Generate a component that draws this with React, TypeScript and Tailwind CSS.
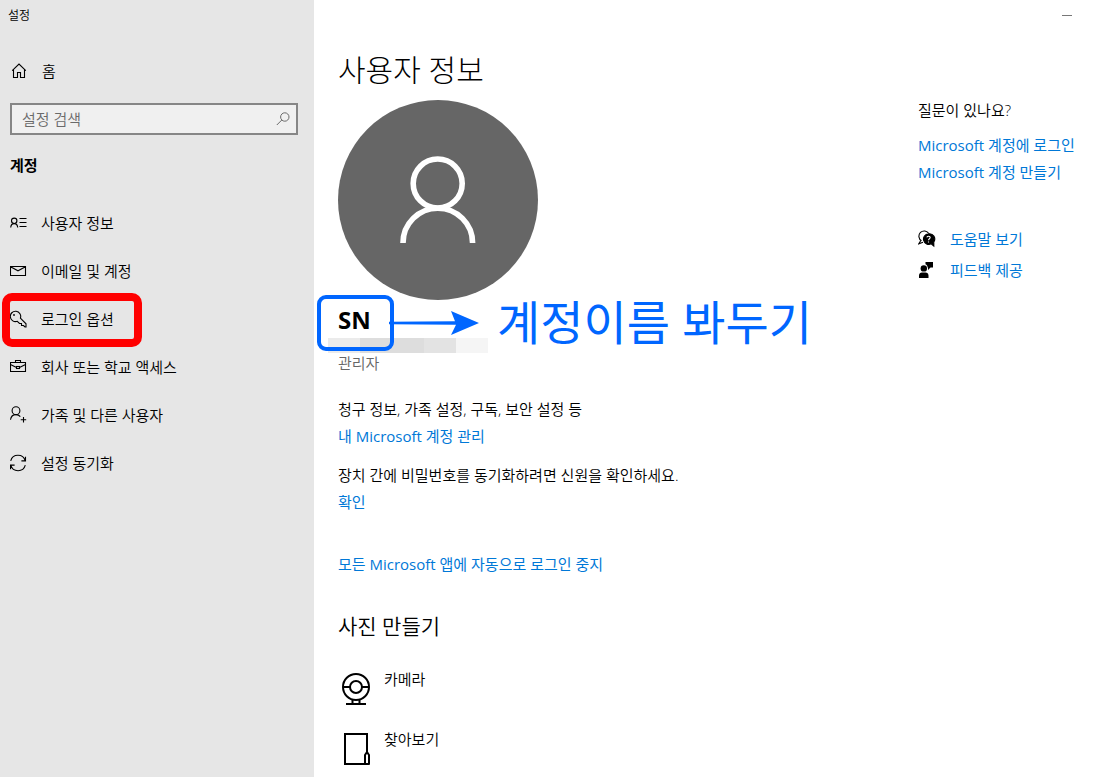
import type { ReactNode } from "react";

function Icon({ children }: { children: ReactNode }) {
  return (
    <svg
      viewBox="0 0 18 18"
      className="size-[18px] shrink-0"
      fill="none"
      stroke="currentColor"
      strokeWidth="1.1"
      aria-hidden="true"
    >
      {children}
    </svg>
  );
}

const navItems: { label: string; icon: ReactNode; highlighted?: boolean }[] = [
  {
    label: "사용자 정보",
    icon: (
      <>
        <circle cx="4.2" cy="6.8" r="2.7" />
        <path d="M0.7 13.5C0.9 11 2.2 9.6 4.2 9.6S7.5 11 7.7 13.5M9.5 4.5H16.5M9.5 8.5H16.5M9.5 12.5H16.5" />
      </>
    ),
  },
  {
    label: "이메일 및 계정",
    icon: <path d="M0.5 4.5H15.5V13.5H0.5ZM0.5 4.8L8 8.8L15.5 4.8" />,
  },
  {
    label: "로그인 옵션",
    highlighted: true,
    icon: (
      <>
        <path d="M10.4 8.2A5.2 5.2 0 1 0 7.3 11.3L9.5 13.5H11.5V15.5H13.5L15 17H16V13.8Z" />
        <circle cx="4" cy="5" r="0.9" fill="currentColor" stroke="none" />
      </>
    ),
  },
  {
    label: "회사 또는 학교 액세스",
    icon: (
      <>
        <path d="M0.5 4.5H15.5V13.5H0.5ZM5.5 4.5V2.5H10.5V4.5M0.5 6.5L6 9.3M10 9.3L15.5 6.5" />
        <rect x="6.5" y="8.5" width="3" height="2" />
      </>
    ),
  },
  {
    label: "가족 및 다른 사용자",
    icon: (
      <>
        <circle cx="6" cy="4.7" r="3.9" />
        <path d="M0.5 13.8C0.9 10.6 3 8.6 6 8.6C7.9 8.6 9.3 9.3 10.3 10.6M13.5 11V16.5M10.7 13.7H16.2" />
      </>
    ),
  },
  {
    label: "설정 동기화",
    icon: (
      <path d="M0.7 6.8A7.5 7.5 0 0 1 15.2 6.8M15.5 2.8V6.9H11.4M15.3 11.2A7.5 7.5 0 0 1 0.8 11.2M0.5 15.2V11.1H4.6" />
    ),
  },
];

const mosaic = ["bg-[#ebebeb]", "bg-[#dddddd]", "bg-[#dddddd]", "bg-[#e3e3e3]", "bg-[#f5f5f5]"];

function TextLink({ children }: { children: ReactNode }) {
  return (
    <a href="#" className="font-normal text-[#0078d7] hover:text-gray-500">
      {children}
    </a>
  );
}

function Sidebar() {
  return (
    <aside className="w-[314px] shrink-0 bg-[#e6e6e6]">
      <div className="px-2 pt-1.5 text-xs leading-5">설정</div>
      <button type="button" className="mt-[29px] flex h-8 w-full items-center gap-3.5 px-2.5">
        <Icon>
          <path d="M2.2 8.6L9 2L15.8 8.6M3.5 7.6V15.5H7.5V10.5H10.5V15.5H14.5V7.6" />
        </Icon>
        홈
      </button>
      <div className="mt-4 pr-4 pl-2.5">
        <label className="flex h-8 items-center border-2 border-[#868686] bg-[#f0f0f0] pr-1.5 pl-2.5">
          <input
            type="text"
            placeholder="설정 검색"
            aria-label="설정 검색"
            className="min-w-0 flex-1 bg-transparent leading-5 outline-none placeholder:text-[#6a6a6a]"
          />
          <svg
            viewBox="0 0 14 14"
            className="size-3.5 text-[#6a6a6a]"
            fill="none"
            stroke="currentColor"
            aria-hidden="true"
          >
            <circle cx="8.8" cy="5" r="4.2" />
            <path d="M5.8 8L0.8 13" />
          </svg>
        </label>
      </div>
      <h2 className="mt-5 px-2.5 leading-5 font-bold">계정</h2>
      <nav className="mt-6">
        {navItems.map((item) => (
          <button
            key={item.label}
            type="button"
            className="relative flex h-12 w-full items-center gap-[13px] px-2.5 text-left"
          >
            <Icon>{item.icon}</Icon>
            <span>{item.label}</span>
            {item.highlighted && (
              <span className="absolute -top-0.5 left-0.5 h-[54px] w-[140px] rounded-[10px] border-8 border-[#ff0000]" />
            )}
          </button>
        ))}
      </nav>
    </aside>
  );
}

function AccountName() {
  return (
    <div className="relative pt-1">
      <div className="text-2xl leading-8 font-bold">SN</div>
      <div className="-ml-2.5 flex pt-0.5">
        {mosaic.map((shade, index) => (
          <span key={index} className={`h-[15px] w-8 ${shade}`} />
        ))}
      </div>
      <div className="absolute -top-[5px] -left-[21px] h-14 w-[77px] rounded-[9px] border-4 border-[#0066ff]" />
      <div className="absolute top-0 left-[51px] flex h-[46px] items-center gap-[18px] whitespace-nowrap text-[#0066ff]">
        <svg viewBox="0 0 90 26" className="h-[26px] w-[90px]" aria-hidden="true">
          <path d="M0 11.8L66 11.3L62 1L90 13L62 25L67 14.7L0 14.3Z" fill="currentColor" />
        </svg>
        <span className="pb-0.5 text-[47px] leading-[46px] font-normal">계정이름 봐두기</span>
      </div>
    </div>
  );
}

function Profile() {
  return (
    <section className="min-w-0 flex-1">
      <h1 className="text-[30px] leading-10 font-light">사용자 정보</h1>
      <svg viewBox="0 0 200 200" className="mt-2.5 size-[200px]" role="img" aria-label="프로필 사진">
        <circle cx="100" cy="100" r="100" fill="#666666" />
        <g fill="none" stroke="#ffffff" strokeWidth="5.6">
          <circle cx="99.7" cy="83.5" r="24.5" />
          <path d="M65 143A34.8 34.8 0 0 1 134.6 143" />
        </g>
      </svg>
      <AccountName />
      <div className="leading-5 text-[#666666]">관리자</div>
      <p className="mt-[26px] leading-5">청구 정보, 가족 설정, 구독, 보안 설정 등</p>
      <p className="mt-[7px] leading-5">
        <TextLink>내 Microsoft 계정 관리</TextLink>
      </p>
      <p className="mt-[19px] leading-5">
        장치 간에 비밀번호를 동기화하려면 신원을 확인하세요.
      </p>
      <p className="mt-[7px] leading-5">
        <TextLink>확인</TextLink>
      </p>
      <p className="mt-[42px] leading-5">
        <TextLink>모든 Microsoft 앱에 자동으로 로그인 중지</TextLink>
      </p>
      <h2 className="mt-9 text-[21px] leading-8">사진 만들기</h2>
      <button type="button" className="mt-[27px] flex items-start gap-2.5">
        <svg
          viewBox="0 0 36 36"
          className="mt-0.5 size-9"
          fill="none"
          stroke="currentColor"
          strokeWidth="2"
          aria-hidden="true"
        >
          <circle cx="18" cy="16" r="13" />
          <circle cx="18" cy="16" r="6" />
          <path d="M5 16H12M24 16H31M14.5 28.5V32M21.5 28.5V32M8 33H28" />
        </svg>
        <span className="leading-5">카메라</span>
      </button>
      <button type="button" className="mt-[22px] flex items-start gap-2.5">
        <svg
          viewBox="0 0 36 36"
          className="mt-0.5 size-9"
          fill="none"
          stroke="currentColor"
          strokeWidth="2"
          aria-hidden="true"
        >
          <path d="M29 21V3H7V33H29" />
          <path d="M27 33V24L29 21L31 24V33Z" strokeLinejoin="round" />
        </svg>
        <span className="leading-5">찾아보기</span>
      </button>
    </section>
  );
}

function HelpPanel() {
  return (
    <aside className="w-[175px] shrink-0 pt-[50px]">
      <h2 className="leading-5">질문이 있나요?</h2>
      <p className="mt-[15px] leading-5 whitespace-nowrap">
        <TextLink>Microsoft 계정에 로그인</TextLink>
      </p>
      <p className="mt-[7px] leading-5">
        <TextLink>Microsoft 계정 만들기</TextLink>
      </p>
      <div className="mt-[47px] flex items-center gap-3.5 leading-5">
        <Icon>
          <path d="M3.5 10.8A5.3 5.3 0 1 1 10.8 3.6M3 10.2L0.8 13.8L5 12.2" />
          <path
            d="M10.5 3.8A5.3 5.3 0 1 0 13.2 13.8L15.8 16V12A5.3 5.3 0 0 0 10.5 3.8Z"
            fill="currentColor"
          />
          <path
            d="M8.9 7.4C9.1 5.7 12.2 5.8 12.2 7.6C12.2 8.7 10.5 8.9 10.5 10.3M10.5 11.4V12.6"
            stroke="#ffffff"
          />
        </Icon>
        <TextLink>도움말 보기</TextLink>
      </div>
      <div className="mt-[11px] flex items-center gap-3.5 leading-5">
        <Icon>
          <g fill="currentColor" stroke="none">
            <circle cx="5.8" cy="7.4" r="3.2" />
            <path d="M1 17V14.5C1 12.6 2.3 11.5 4 11.5H7.5C9.2 11.5 10.5 12.6 10.5 14.5V17Z" />
            <path d="M7.5 1H15V6.5H12.5L10 9V6.5H9.6C9.5 4.8 8.8 3.8 7.5 3.3Z" />
          </g>
        </Icon>
        <TextLink>피드백 제공</TextLink>
      </div>
    </aside>
  );
}

export default function App() {
  return (
    <div className="flex min-h-screen bg-white font-['Open_Sans','Noto_Sans_CJK_KR',sans-serif] text-[15px] font-[350] text-black">
      <Sidebar />
      <main className="min-w-0 flex-1">
        <div className="flex h-[31px] justify-end">
          <button type="button" aria-label="최소화" className="flex w-[52px] items-center justify-center">
            <span className="h-px w-2.5 bg-[#777777]" />
          </button>
        </div>
        <div className="flex pt-[19px] pl-6">
          <Profile />
          <HelpPanel />
        </div>
      </main>
    </div>
  );
}
